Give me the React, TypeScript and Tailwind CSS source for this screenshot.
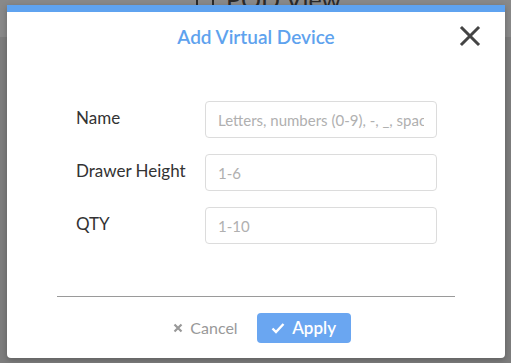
import React from "react";

const fields = [
  { label: "Name", placeholder: "Letters, numbers (0-9), -, _, space" },
  { label: "Drawer Height", placeholder: "1-6" },
  { label: "QTY", placeholder: "1-10" },
];

const App: React.FC = () => {
  return (
    <div
      className="relative w-[511px] h-[363px] overflow-hidden bg-[#7d7d7d]"
      style={{ fontFamily: "'Source Sans Pro', Lato, 'Noto Sans', sans-serif" }}
    >
      {/* page behind the overlay */}
      <div className="h-[37px] bg-[#898989] flex items-start pl-[196px]">
        <div className="flex items-center gap-[12px] -mt-[13px]">
          <div className="w-[18px] h-[16px] border-2 border-[#2a2a2a] rounded-[2px]"></div>
          <span className="text-[25px] text-[#2a2a2a] leading-none">POD View</span>
        </div>
      </div>

      {/* modal */}
      <div className="absolute left-[7px] top-[5px] w-[498px] h-[353px] bg-white rounded-b-[4px] border-t-[7px] border-[#5fa3f0] shadow-[0_2px_6px_rgba(0,0,0,0.25)] flex flex-col">
        <div className="relative h-[50px] flex items-center justify-center">
          <h2 className="text-[19px] font-semibold text-[#5ea2ee]">Add Virtual Device</h2>
          <button className="absolute right-[24px] top-[13px] text-[#444]">
            <svg width="22" height="22" viewBox="0 0 22 22">
              <path d="M3 3L19 19M19 3L3 19" stroke="currentColor" strokeWidth="3" strokeLinecap="square" />
            </svg>
          </button>
        </div>

        <div className="flex flex-col gap-[16px] mt-[39px] pl-[69px]">
          {fields.map((f) => (
            <div key={f.label} className="flex items-start">
              <label className="w-[129px] text-[17px] text-[#333] pt-[4px]">{f.label}</label>
              <input
                className="w-[232px] h-[37px] border border-[#dcdcdc] rounded-[4px] px-[12px] text-[15px] text-[#333] placeholder:text-[#b0b0b0] outline-none"
                placeholder={f.placeholder}
              />
            </div>
          ))}
        </div>

        <div className="mx-[50px] mt-[52px] border-t border-[#9a9a9a]"></div>

        <div className="flex items-center justify-center gap-[19px] mt-[16px] ml-[12px]">
          <button className="flex items-center gap-[7px] text-[16px] text-[#999]">
            <svg width="10" height="10" viewBox="0 0 10 10">
              <path d="M1.5 1.5L8.5 8.5M8.5 1.5L1.5 8.5" stroke="currentColor" strokeWidth="2.2" />
            </svg>
            Cancel
          </button>
          <button className="flex items-center justify-center gap-[7px] w-[94px] h-[30px] rounded-[4px] bg-[#6aa6f1] text-white text-[17px] font-semibold">
            <svg width="14" height="12" viewBox="0 0 14 12">
              <path d="M1.5 6.5L5 10L12.5 2" stroke="currentColor" strokeWidth="2.4" fill="none" />
            </svg>
            Apply
          </button>
        </div>
      </div>
    </div>
  );
};

export default App;
